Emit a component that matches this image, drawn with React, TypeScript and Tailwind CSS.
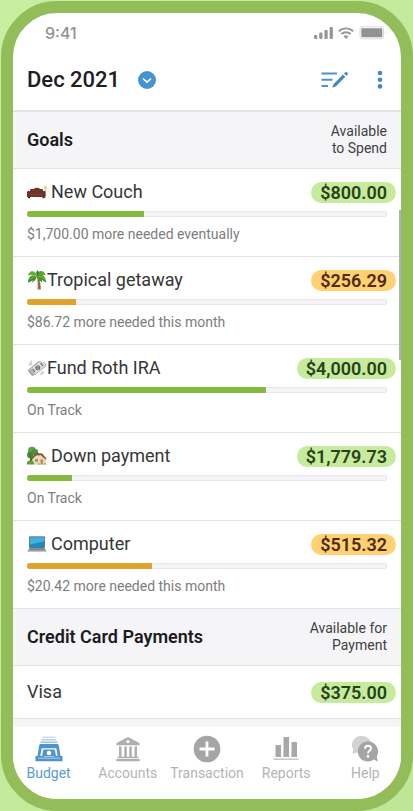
import type { ReactNode } from "react";

function CouchIcon() {
  return (
    <svg viewBox="0 0 20 20" className="size-5" aria-hidden="true">
      <path d="M18.3 5v11" stroke="#c9b48e" strokeWidth="0.9" />
      <path d="M17.2 3.8h2.2l.6 3.2h-3.3z" fill="#f3cf85" />
      <path d="M3 8q0-1 1.2-1h2.5q1.300-1.200 3.300-1.200t3.200 1.200h1.600q1.200 0 1.200 1v5H3z" fill="#713427" />
      <path d="M0 10.500q0-1.700 1.600-1.700t1.700 1.700v1.200h12.200v-1.200q0-1.700 1.500-1.700t1.500 1.700V15H0z" fill="#6a3125" />
      <path d="M3.300 11.600h12.200v1.900H3.300z" fill="#7d3c2c" />
      <path d="M1 15h2v1.200H1zM15.500 15h2v1.200h-2z" fill="#402019" />
    </svg>
  );
}

function PalmIcon() {
  return (
    <svg viewBox="0 0 20 20" className="size-5" aria-hidden="true">
      <path d="M9.500 6q1.800 5.500 1 13.500h3.500Q13.500 12 11.200 6z" fill="#a3714c" />
      <path d="M11.200 11l2-.4M11.400 14l2.100-.3M11.400 17l2.200-.2" stroke="#75492e" strokeWidth="0.7" />
      <path d="M10 6Q6.500 4.500 3.800 6.300T1 12.500q3.500-1 4.700-2.600L5 12.500Q9 10.500 10 6z" fill="#3f8f2b" />
      <path d="M10 6Q12 3.500 15.300 5t3.900 7.500q-2.500-.5-4-2.400l-.3 2.300Q11 10 10 6z" fill="#47992d" />
      <path d="M10 6Q8.800 1.200 5.200 1.300 2 1.500 1 5.500q2.500-.8 4-.3Q8 4.600 10 6z" fill="#60b23a" />
      <path d="M10 6q0-4.200 3.600-5 3.900-.2 5 4.300-2-.8-3.700-.1Q12 4.300 10 6z" fill="#52a633" />
      <path d="M10 6Q8 2.500 10.500.3q2.200 1.700.6 5.700z" fill="#377d27" />
      <path d="M3 9.500q3-3.300 6.500-3M17.500 9Q14 5.500 10.700 6.300" stroke="#8ccd55" strokeWidth="0.700" fill="none" />
    </svg>
  );
}

function MoneyIcon() {
  return (
    <svg viewBox="0 0 20 20" className="size-5" aria-hidden="true">
      <g stroke="#8e8e8c" strokeWidth="0.600">
        <path d="M1 12.500L11.500 3.500l4.500 5L5.500 18z" fill="#b9b9b5" />
        <path d="M3.500 10.500L13 3l5.300 5.500L8 16.500z" fill="#dededa" />
      </g>
      <circle cx="10.800" cy="9.800" r="2.500" fill="#777775" />
      <path d="M10 8.800h1.700M9.900 10.800h1.700" stroke="#d5d5d0" strokeWidth="0.700" />
      <path d="M5.500 10.800L8 13.800M13.500 5.200l2.300 3" stroke="#737371" strokeWidth="1.200" />
      <path d="M2 8Q1.300 4.500 5 2q-.6 3 1 5zM12.500 17q3.800.5 5.500-3.500-2 .5-3.500-.6z" fill="#d4d4d2" />
      <path d="M2.300 13l3.200 4M16 4.500q3.200.5 3 3.500" stroke="#8f8f8d" strokeWidth="0.800" fill="none" />
    </svg>
  );
}

function HouseIcon() {
  return (
    <svg viewBox="0 0 20 20" className="size-5" aria-hidden="true">
      <path d="M3 10h2.600v8H3z" fill="#785035" />
      <circle cx="5" cy="4.800" r="4" fill="#59a43b" />
      <circle cx="3.300" cy="9" r="3.200" fill="#3f8430" />
      <circle cx="8" cy="6.300" r="3.200" fill="#4a9235" />
      <path d="M5 12.300l4.400-4 5 1.200 4.600 4v5H6z" fill="#ecdab5" />
      <path d="M3.800 13L9 7l6.300.5 4.200 5.300-1.100.7-4.500-4.300-4.900.4-4.100 4.100z" fill="#885138" />
      <path d="M8 13h3v2.700H8z" fill="#839aa1" />
      <path d="M13.500 13.300h2.500v5.200h-2.500z" fill="#bd8f69" />
      <path d="M0 16q1.700-2.700 4-.8 2-1.500 3.500 3.300H0z" fill="#58a23a" />
      <path d="M10 18.500q1.500-2.500 3.500 0M16 18.500q1.700-3 3.800 0" fill="#80b957" />
    </svg>
  );
}

function LaptopIcon() {
  return (
    <svg viewBox="0 0 20 20" className="size-5" aria-hidden="true">
      <path d="M2.300 2.500h15.400v11.300H2.300z" fill="#30434d" />
      <path d="M3 3.200h14V13H3z" fill="#168cc5" />
      <path d="M3 3.200h14v4.300L3 10.500z" fill="#42afe0" />
      <path d="M2.300 14h15.400l1.800 3H.5z" fill="#9ba6ab" />
      <path d="M3 14.500h14l.6 1.200H2.400z" fill="#6e797e" />
      <path d="M.5 17h19v1H.5z" fill="#c0c5c8" />
    </svg>
  );
}

function BudgetIcon() {
  return (
    <svg viewBox="0 0 28 28" className="size-7" aria-hidden="true">
      <path d="M7.500 1.500h13V3h-13z" fill="#c9ddef" />
      <path d="M6.500 4h15v1.500h-15z" fill="#b4d0ea" />
      <path d="M5.500 6.500h17V8h-17z" fill="#9cc2e3" />
      <path d="M5.500 9h17q1 0 1.300 1.500L25.500 21h-23l1.700-10.500Q4.500 9 5.500 9z" fill="#4e93ca" />
      <path d="M6.700 13.200h14.600L22.700 21H5.300z" fill="#fff" />
      <path d="M8.200 14.500h11.600l1.200 7H7z" fill="#4e93ca" />
      <circle cx="14" cy="18" r="2.300" fill="#fff" />
      <path d="M0.500 21h7.500l1.500 1h9l1.500-1h7.500v5.300H.5z" fill="#4e93ca" />
      <path d="M3 23.200h22" stroke="#b4d2eb" strokeWidth="1" />
    </svg>
  );
}

function AccountsIcon() {
  return (
    <svg viewBox="0 0 28 28" className="size-7" fill="#b0b0b0" aria-hidden="true">
      <path fillRule="evenodd" d="M14 2L2.500 8v2.300h23V8zm0 3a1.600 1.600 0 110 3.200A1.600 1.600 0 0114 5z" />
      <path d="M5 11.500h2.500v10.300H5zM10.300 11.500h2.500v10.300h-2.500zM15.300 11.500h2.500v10.300h-2.500zM20.500 11.500h2.500v10.300h-2.500zM3.500 21.800h21v1.500h-21zM2.300 24h23.400v2.300H2.300z" />
    </svg>
  );
}

function TransactionIcon() {
  return (
    <svg viewBox="0 0 28 28" className="size-7" aria-hidden="true">
      <circle cx="14" cy="14" r="13.300" fill="#a5a5a5" />
      <path d="M14 6.500v15M6.500 14h15" stroke="#fff" strokeWidth="2.800" />
    </svg>
  );
}

function ReportsIcon() {
  return (
    <svg viewBox="0 0 28 28" className="size-7" fill="#a8a8a8" aria-hidden="true">
      <path d="M3.500 10h5.500v12H3.500zM11.500 2H17v20h-5.500zM19.500 7H25v15h-5.500z" />
      <path d="M1.500 23.500h25V25h-25z" fill="#c6c6c6" />
    </svg>
  );
}

function HelpIcon() {
  return (
    <svg viewBox="0 0 28 28" className="size-7" aria-hidden="true">
      <path d="M10.500 1a9.500 8.800 0 00-8.300 13.200L1.500 19l4.700-1.500A9.500 8.800 0 1010.500 1z" fill="#d2d2d2" />
      <path d="M16.800 6.500a10 10 0 106 18l4.200 2-1.300-5A10 10 0 0016.800 6.500z" fill="#a5a5a5" />
      <path d="M14 13.700q0-2.900 3-2.900t3 2.700q0 1.500-1.600 2.400-1.400.8-1.400 2.600" stroke="#fff" strokeWidth="1.900" fill="none" />
      <circle cx="17" cy="21.400" r="1.300" fill="#fff" />
    </svg>
  );
}

function StatusIcons() {
  return (
    <div className="flex items-center gap-[5px]">
      <svg viewBox="0 0 19 12" className="h-3 w-[19px]" fill="#969696" aria-label="Signal">
        <rect x="0" y="8" width="3.300" height="4" rx="1" />
        <rect x="5.200" y="5.500" width="3.300" height="6.500" rx="1" />
        <rect x="10.400" y="3" width="3.300" height="9" rx="1" />
        <rect x="15.600" y="0" width="3.300" height="12" rx="1" />
      </svg>
      <svg viewBox="0 0 16 12" className="h-3 w-4" fill="none" stroke="#969696" strokeWidth="1.900" aria-label="Wi-Fi">
        <path d="M.8 4.200a10.500 10.500 0 0114.400 0M3.300 7a7 7 0 019.400 0" />
        <path d="M5.500 9.300a3.800 3.800 0 015 0L8 12z" fill="#969696" stroke="none" />
      </svg>
      <svg viewBox="0 0 28 14" className="h-3.5 w-7" aria-label="Battery">
        <rect x="1" y="0.800" width="23.500" height="12" rx="2" fill="none" stroke="#dadada" />
        <rect x="2.300" y="2.200" width="21" height="9" rx="0.800" fill="#929292" />
        <path d="M26 5q1.500 1.700 0 3.500z" fill="#ccc" />
      </svg>
    </div>
  );
}

type Tone = "green" | "amber";

function Amount({ tone, children }: { tone: Tone; children: ReactNode }) {
  const colors = tone === "green" ? "bg-[#c6eb9c] text-[#28421a]" : "bg-[#ffd173] text-[#4d2c11]";
  return (
    <span className={`-mr-[9px] rounded-full px-[9px] text-lg leading-[21px] font-semibold ${colors}`}>
      {children}
    </span>
  );
}

function SectionHeader({ title, lines }: { title: string; lines: [string, string] }) {
  return (
    <header className="flex items-center justify-between border-b border-[#e2e2e4] bg-[#f5f5f7] px-3.5 py-[11px]">
      <h2 className="text-lg font-semibold text-[#1c1c1e]">{title}</h2>
      <p className="text-right text-sm leading-[17px] text-[#414143]">
        {lines[0]}
        <br />
        {lines[1]}
      </p>
    </header>
  );
}

type Goal = {
  name: string;
  icon: ReactNode;
  spaced: boolean;
  amount: string;
  tone: Tone;
  percent: number;
  note: string;
};

const goals: Goal[] = [
  { name: "New Couch", icon: <CouchIcon />, spaced: true, amount: "$800.00", tone: "green", percent: 32.4, note: "$1,700.00 more needed eventually" },
  { name: "Tropical getaway", icon: <PalmIcon />, spaced: false, amount: "$256.29", tone: "amber", percent: 13.5, note: "$86.72 more needed this month" },
  { name: "Fund Roth IRA", icon: <MoneyIcon />, spaced: false, amount: "$4,000.00", tone: "green", percent: 66.4, note: "On Track" },
  { name: "Down payment", icon: <HouseIcon />, spaced: true, amount: "$1,779.73", tone: "green", percent: 12.5, note: "On Track" },
  { name: "Computer", icon: <LaptopIcon />, spaced: true, amount: "$515.32", tone: "amber", percent: 34.6, note: "$20.42 more needed this month" },
];

function GoalRow({ goal }: { goal: Goal }) {
  return (
    <li className="border-b border-[#e2e2e4] px-3.5 pt-[11px] pb-3">
      <div className="flex items-center justify-between">
        <h3 className={`flex items-center text-lg leading-6 text-[#363638] ${goal.spaced ? "gap-1" : ""}`}>
          {goal.icon}
          {goal.name}
        </h3>
        <Amount tone={goal.tone}>{goal.amount}</Amount>
      </div>
      <div
        role="progressbar"
        aria-label={goal.name}
        aria-valuenow={goal.percent}
        className="mt-[7px] h-1.5 overflow-hidden rounded-full bg-[#f5f5f7] inset-ring inset-ring-[#e8e8eb]"
      >
        <div
          className={`h-full ${goal.tone === "green" ? "bg-[#86b940]" : "bg-[#dfa32b]"}`}
          style={{ width: `${goal.percent}%` }}
        />
      </div>
      <p className="mt-[7px] text-sm text-[#7d7d7f]">{goal.note}</p>
    </li>
  );
}

const tabs = [
  { label: "Budget", icon: <BudgetIcon /> },
  { label: "Accounts", icon: <AccountsIcon /> },
  { label: "Transaction", icon: <TransactionIcon /> },
  { label: "Reports", icon: <ReportsIcon /> },
  { label: "Help", icon: <HelpIcon /> },
];

export default function App() {
  return (
    <div className="flex min-h-screen bg-linear-to-br from-[#c8ee9f] to-[#bfe596] pt-px pl-px font-['Roboto',sans-serif]">
      <div className="relative flex flex-1 flex-col overflow-hidden rounded-[56px] border-12 border-[#92bd59] bg-white">
        <div className="flex items-center justify-between pt-2.5 pr-3.5 pl-8">
          <span className="font-['Inter',sans-serif] text-base leading-5 font-medium text-[#929294]">9:41</span>
          <StatusIcons />
        </div>

        <div className="flex items-center justify-between border-b-2 border-[#e4e4e6] px-3.5 pt-[23px] pb-4">
          <div className="flex items-center gap-[18px]">
            <h1 className="text-[22px] leading-7 font-medium text-[#202022]">Dec 2021</h1>
            <button type="button" aria-label="Choose month">
              <svg viewBox="0 0 18 18" className="size-[18px]" aria-hidden="true">
                <circle cx="9" cy="9" r="9" fill="#4693d2" />
                <path d="M5 7.500l4 3.700 4-3.700" stroke="#fff" strokeWidth="1.600" fill="none" />
              </svg>
            </button>
          </div>
          <div className="flex items-center gap-6">
            <button type="button" aria-label="Edit budget">
              <svg viewBox="0 0 28 20" className="h-5 w-7" aria-hidden="true">
                <path d="M.5 3.500h15.500M.5 9.700h11M.5 16h6.500" stroke="#4b93ca" strokeWidth="1.900" />
                <path d="M12.500 14.200L22 4.500l2.300 2.300L15 16.300l-3.700 1.500z" fill="#3f87c1" />
                <path d="M23 3.500l1.300-1.200q1-.8 2 .2t.2 2l-1.200 1.300z" fill="#3f87c1" />
              </svg>
            </button>
            <button type="button" aria-label="More options">
              <svg viewBox="0 0 14 20" className="h-5 w-3.5" fill="#3f8ac7" aria-hidden="true">
                <circle cx="7" cy="3" r="2.300" />
                <circle cx="7" cy="9.700" r="2.300" />
                <circle cx="7" cy="16.400" r="2.300" />
              </svg>
            </button>
          </div>
        </div>

        <main className="flex flex-1 flex-col">
          <section>
            <SectionHeader title="Goals" lines={["Available", "to Spend"]} />
            <ul>
              {goals.map((goal) => (
                <GoalRow key={goal.name} goal={goal} />
              ))}
            </ul>
          </section>
          <section>
            <SectionHeader title="Credit Card Payments" lines={["Available for", "Payment"]} />
            <div className="flex items-center justify-between border-b border-[#e2e2e4] px-3.5 py-3.5">
              <h3 className="text-lg leading-6 text-[#363638]">Visa</h3>
              <Amount tone="green">$375.00</Amount>
            </div>
          </section>
          <div className="min-h-2 flex-1 bg-[#f5f5f7]" />
        </main>

        <nav className="-mx-1 grid grid-cols-5 bg-white pt-2 pb-[18px]">
          {tabs.map((tab) => (
            <button
              key={tab.label}
              type="button"
              className={`flex flex-col items-center gap-0.5 text-sm leading-4 ${tab.label === "Budget" ? "text-[#5c9bd0]" : "text-[#b4b4b6]"}`}
            >
              {tab.icon}
              {tab.label}
            </button>
          ))}
        </nav>

        <div className="absolute top-[197px] right-0 h-[150px] w-0.5 bg-[#b0b0b2]" />
      </div>
    </div>
  );
}
